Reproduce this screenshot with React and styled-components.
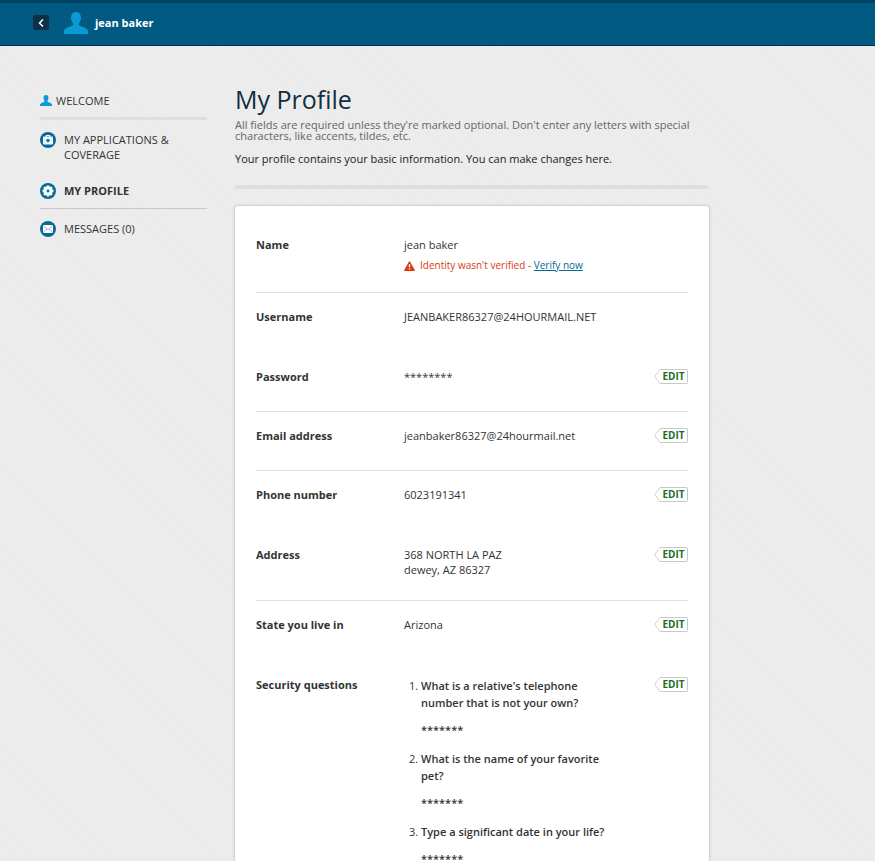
import React from "react";
import styled, { createGlobalStyle, css } from "styled-components";

const GlobalStyle = createGlobalStyle`
  *, *::before, *::after { box-sizing: border-box; }
  body {
    margin: 0;
    background: #ececec;
    color: #333;
    font: 11px/15px "Open Sans", "Noto Sans", sans-serif;
  }
  h1, p, dl, dd, ul, ol { margin: 0; padding: 0; }
  svg { flex-shrink: 0; }
`;

const Page = styled.div`
  height: 100vh;
  overflow-y: auto;
  scrollbar-width: none;
  background: repeating-linear-gradient(45deg, #ebebeb 0 1px, #ededed 1px 2px);
`;

const Header = styled.header`
  display: flex;
  align-items: center;
  height: 46px;
  padding: 0 33px 3px;
  border-top: 3px solid #004262;
  border-bottom: 1px solid #003350;
  background: #005a82;
`;

const BackButton = styled.button`
  display: flex;
  align-items: center;
  justify-content: center;
  width: 16px;
  height: 15px;
  margin-right: 15px;
  padding: 0;
  border: 0;
  border-radius: 2px;
  background: #0b3247;
  color: #fff;
  cursor: pointer;
`;

const UserName = styled.span`
  margin-left: 7px;
  color: #fff;
  font-weight: 700;
`;

const Layout = styled.div`
  display: grid;
  grid-template-columns: 167px minmax(0, 474px);
  column-gap: 28px;
  padding: 38px 40px 0;
`;

const Sidebar = styled.nav`
  padding-top: 9px;
`;

const NavList = styled.ul`
  list-style: none;
`;

const WelcomeLink = styled.a`
  display: flex;
  align-items: center;
  gap: 4px;
  padding-bottom: 9px;
  border-bottom: 3px solid #dedede;
  color: #333;
  text-decoration: none;
`;

const NavItem = styled.li`
  padding: 12px 0 9px;
  ${(p) => p.$divided && css`border-bottom: 1px solid #c8c8c8;`}
`;

const NavLink = styled.a`
  display: flex;
  align-items: flex-start;
  gap: 8px;
  color: #333;
  font-weight: ${(p) => (p.$active ? 700 : 400)};
  text-decoration: none;
`;

const Main = styled.main`
  min-width: 0;
`;

const Title = styled.h1`
  color: #112e42;
  font-size: 25px;
  font-weight: 400;
  line-height: 30px;
`;

const Note = styled.p`
  margin-top: 5px;
  color: #666;
  line-height: 11px;
`;

const Intro = styled.p`
  margin-top: 10px;
  color: #212121;
`;

const Rule = styled.div`
  height: 4px;
  margin: 19px 0 17px;
  border-radius: 2px;
  background: #dedede;
`;

const Card = styled.div`
  padding: 15px 21px 24px;
  border-radius: 3px 3px 0 0;
  background: #fff;
  box-shadow: 0 0 3px rgba(0, 0, 0, 0.3);
`;

const Group = styled.dl`
  display: flex;
  flex-direction: column;
  gap: 2px;
  border-bottom: ${(p) => (p.$last ? "0" : "1px solid #dedede")};
`;

const Row = styled.div`
  display: grid;
  grid-template-columns: 148px minmax(0, 1fr) 34px;
  align-items: start;
  min-height: 58px;
  padding: 16px 0 ${(p) => (p.$compact ? 19 : 23)}px;
`;

const Label = styled.dt`
  font-weight: 700;
`;

const Value = styled.dd`
  min-width: 0;
`;

const Warning = styled.p`
  display: flex;
  align-items: center;
  gap: 5px;
  margin-top: 6px;
  color: #d93a12;
  font-size: 10px;
`;

const VerifyLink = styled.a`
  color: #046b99;
`;

const EditButton = styled.button`
  display: flex;
  align-items: center;
  width: 34px;
  height: 15px;
  padding: 0;
  border: 0;
  background: transparent;
  color: #216e1f;
  font: 700 10px/13px "Open Sans", "Noto Sans", sans-serif;
  cursor: pointer;
`;

const EditText = styled.span`
  flex: 1;
  height: 15px;
  border: 1px solid #c8c8c8;
  border-left: 0;
  border-radius: 0 2px 2px 0;
  text-align: center;
`;

const Questions = styled.ol`
  width: 210px;
  padding-left: 17px;
  line-height: 17px;
`;

const QuestionItem = styled.li`
  margin-bottom: 12px;
`;

const Question = styled.p`
  font-weight: 600;
`;

const Answer = styled.p`
  margin-top: 10px;
  font-weight: 600;
`;

const PersonIcon = ({ width, height }) => (
  <svg width={width} height={height} viewBox="0 0 24 22" fill="#0a9bd6" aria-hidden="true">
    <path d="M7.300 4.500C7.300 1.500 9 0 12 0s4.700 1.500 4.700 4.500c0 1.200.6 1.500.2 3-.4 1.200-.9 2-1.400 3-.6 1-.9 2-.3 2.800C17 15 24 15.500 24 19.500V22H0v-2.500c0-4 7-4.500 8.800-6.200.6-.8.3-1.800-.3-2.800-.5-1-1-1.800-1.400-3-.4-1.500.2-1.800.2-3z" />
  </svg>
);

const Badge = ({ children }) => (
  <svg width="16" height="16" viewBox="0 0 16 16" aria-hidden="true">
    <circle cx="8" cy="8" r="8" fill="#046b99" />
    {children}
  </svg>
);

const KitIcon = () => (
  <Badge>
    <path d="M6 5V3.500h4V5" fill="none" stroke="#fff" />
    <rect x="3" y="4.500" width="10" height="8" rx="1" fill="#fff" />
    <path d="M4.700 5v7M11.300 5v7" stroke="#b5d1df" strokeWidth=".5" />
    <path d="M8 6.500v4M6 8.500h4" stroke="#046b99" strokeWidth="1.300" />
  </Badge>
);

const GearIcon = () => (
  <Badge>
    <circle cx="8" cy="8" r="4.600" fill="#fff" />
    <path d="M8 2.500v11M2.500 8h11M4.100 4.100l7.800 7.800M11.900 4.100l-7.800 7.800" stroke="#fff" strokeWidth="2.600" />
    <circle cx="8" cy="8" r="1.400" fill="#046b99" />
  </Badge>
);

const MailIcon = () => (
  <Badge>
    <rect x="3" y="4" width="10" height="8" rx="1" fill="#fff" />
    <path d="M3.500 4.700l4.500 4 4.500-4M3.500 11.500l3-3.500M12.500 11.500l-3-3.500" fill="none" stroke="#6aa5c2" strokeWidth=".8" />
  </Badge>
);

const AlertIcon = () => (
  <svg width="11" height="10" viewBox="0 0 11 10" aria-hidden="true">
    <path d="M5.500.6L10.500 9.500H.5z" fill="#d93a12" stroke="#d93a12" strokeLinejoin="round" />
    <path d="M5.500 3.200v3M5.500 7.200v1.300" stroke="#fff" strokeWidth="1.300" />
  </svg>
);

const Edit = ({ subject }) => (
  <EditButton type="button" aria-label={`Edit ${subject}`}>
    <svg width="6" height="15" viewBox="0 0 6 15" fill="none" stroke="#d0d0d0" aria-hidden="true">
      <path d="M6 .5L.7 7.500 6 14.500" />
    </svg>
    <EditText>EDIT</EditText>
  </EditButton>
);

const navItems = [
  { text: "MY APPLICATIONS & COVERAGE", Icon: KitIcon },
  { text: "MY PROFILE", Icon: GearIcon, active: true },
  { text: "MESSAGES (0)", Icon: MailIcon },
];

const questions = [
  "What is a relative's telephone number that is not your own?",
  "What is the name of your favorite pet?",
  "Type a significant date in your life?",
];

const groups = [
  [
    {
      label: "Name",
      compact: true,
      value: (
        <>
          jean baker
          <Warning>
            <AlertIcon />
            <span>
              Identity wasn't verified - <VerifyLink href="#verify">Verify now</VerifyLink>
            </span>
          </Warning>
        </>
      ),
    },
  ],
  [
    { label: "Username", value: "JEANBAKER86327@24HOURMAIL.NET" },
    { label: "Password", value: "********", editable: true },
  ],
  [{ label: "Email address", value: "jeanbaker86327@24hourmail.net", editable: true }],
  [
    { label: "Phone number", value: "6023191341", editable: true },
    { label: "Address", value: <>368 NORTH LA PAZ<br />dewey, AZ 86327</>, editable: true },
  ],
  [
    { label: "State you live in", value: "Arizona", editable: true },
    {
      label: "Security questions",
      editable: true,
      value: (
        <Questions>
          {questions.map((q) => (
            <QuestionItem key={q}>
              <Question>{q}</Question>
              <Answer>*******</Answer>
            </QuestionItem>
          ))}
        </Questions>
      ),
    },
  ],
];

export default function App() {
  return (
    <>
      <GlobalStyle />
      <Page>
        <Header>
          <BackButton type="button" aria-label="Back">
            <svg width="6" height="8" viewBox="0 0 6 8" fill="none" stroke="currentColor" strokeWidth="1.500" aria-hidden="true">
              <path d="M5 .5L1.500 4 5 7.500" />
            </svg>
          </BackButton>
          <PersonIcon width="24" height="22" />
          <UserName>jean baker</UserName>
        </Header>
        <Layout>
          <Sidebar aria-label="Account">
            <WelcomeLink href="#welcome">
              <PersonIcon width="12" height="13" />
              WELCOME
            </WelcomeLink>
            <NavList>
              {navItems.map(({ text, Icon, active }) => (
                <NavItem key={text} $divided={active}>
                  <NavLink href="#account" $active={active} aria-current={active ? "page" : undefined}>
                    <Icon />
                    <span>{text}</span>
                  </NavLink>
                </NavItem>
              ))}
            </NavList>
          </Sidebar>
          <Main>
            <Title>My Profile</Title>
            <Note>
              All fields are required unless they're marked optional. Don't enter any letters with
              special characters, like accents, tildes, etc.
            </Note>
            <Intro>Your profile contains your basic information. You can make changes here.</Intro>
            <Rule />
            <Card>
              {groups.map((rows, i) => (
                <Group key={rows[0].label} $last={i === groups.length - 1}>
                  {rows.map(({ label, value, editable, compact }) => (
                    <Row key={label} $compact={compact}>
                      <Label>{label}</Label>
                      <Value>{value}</Value>
                      {editable && <Edit subject={label} />}
                    </Row>
                  ))}
                </Group>
              ))}
            </Card>
          </Main>
        </Layout>
      </Page>
    </>
  );
}
